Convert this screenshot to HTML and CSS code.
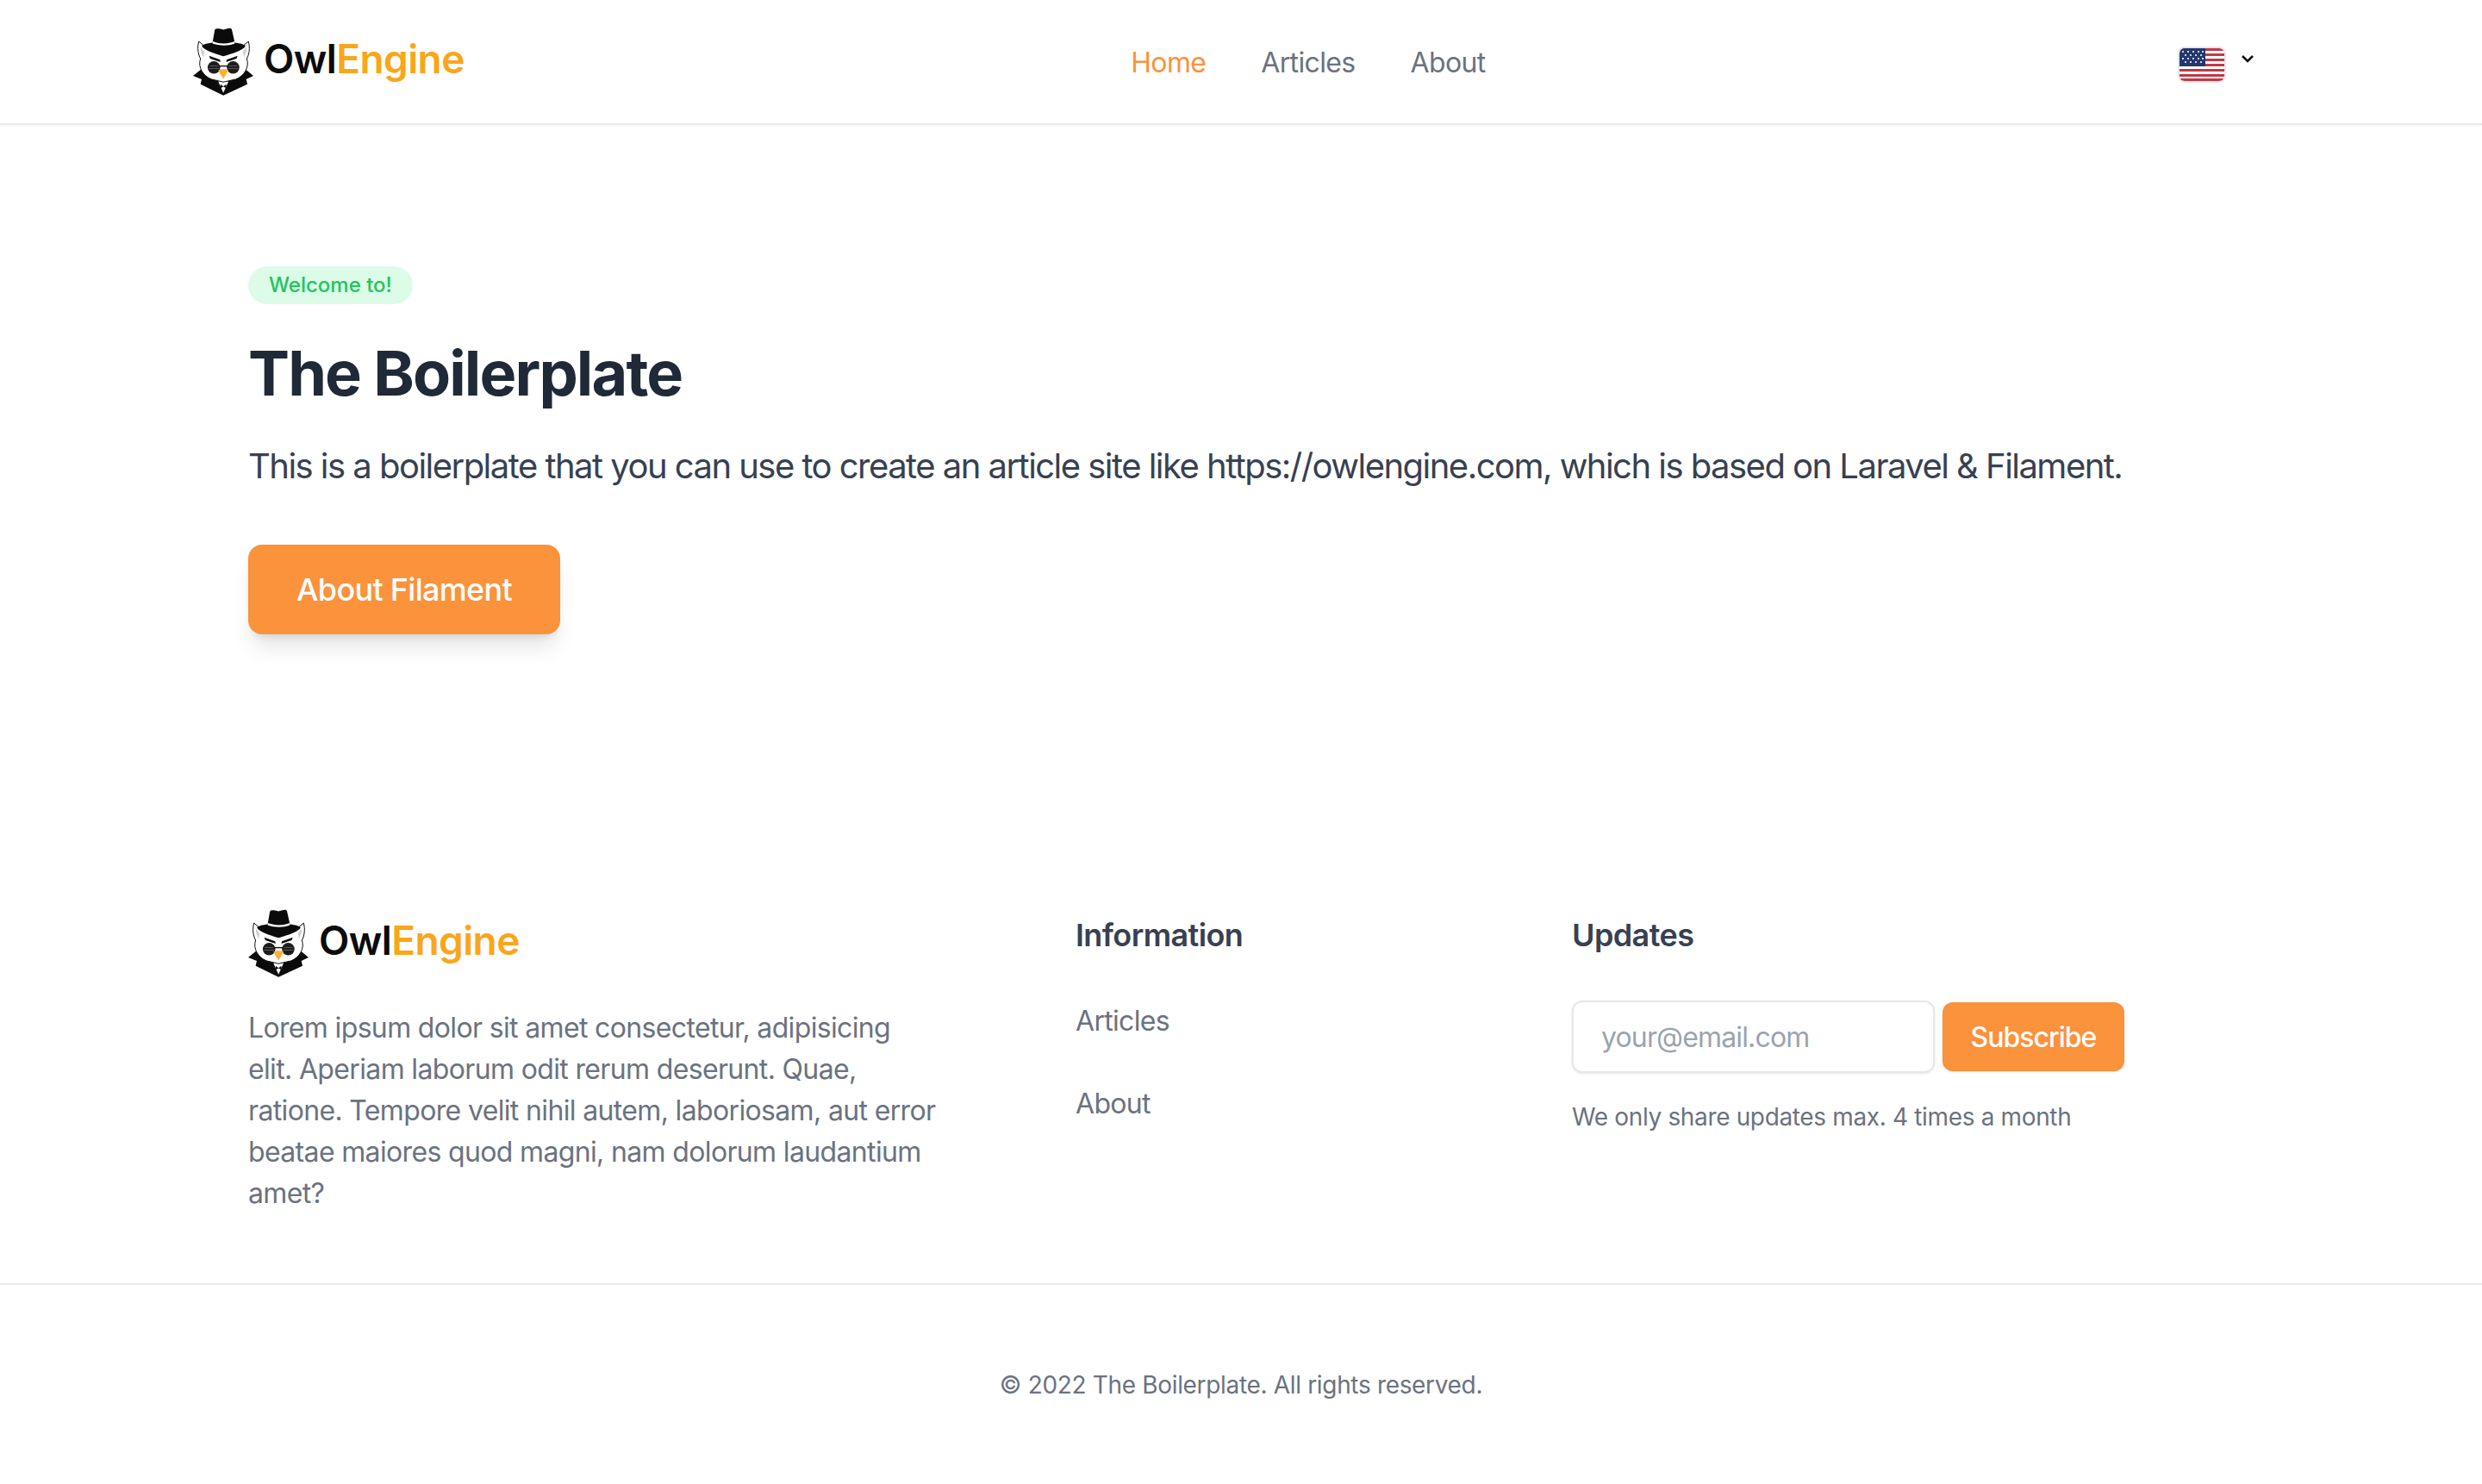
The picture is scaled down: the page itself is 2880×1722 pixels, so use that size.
FILE: index.html
```html
<!DOCTYPE html>
<html lang="en">
<head>
    <meta charset="UTF-8">
    <meta name="viewport" content="width=device-width, initial-scale=1.0">
    <title>The Boilerplate</title>
    <link rel="stylesheet" href="styles.css">
</head>
<body>
    <svg class="defs" width="0" height="0">
        <symbol id="owl" viewBox="72 65 211 240">
            <!-- suit -->
            <path fill="#0b0b0b" d="M72 236 L100 214 L135 244 L178 262 L222 244 L256 214 L283 236 L258 248 L262 266 L178 305 L98 266 L102 248 Z"/>
            <path fill="#fff" d="M160 256 L196 256 L178 296 Z"/>
            <path fill="#0b0b0b" d="M168 266 L178 273 L188 266 L188 279 L178 274 L168 279 Z"/>
            <!-- head -->
            <path fill="#fff" stroke="#0b0b0b" stroke-width="3" d="M92 116 L112 132 L246 132 L266 116 C272 140 268 162 260 176 C270 205 252 236 222 248 L178 258 L136 248 C106 236 88 205 98 176 C90 162 86 140 92 116 Z"/>
            <path fill="#cfcfcf" d="M98 134 L112 152 L108 172 C102 160 98 148 98 134 Z M260 134 L246 152 L250 172 C256 160 260 148 260 134 Z"/>
            <!-- hat -->
            <path fill="#0b0b0b" d="M103 132 C100 128 122 122 140 120 L148 76 C150 68 170 72 178 75 C188 72 206 64 208 76 L218 120 C236 122 258 128 255 132 C248 146 215 156 178 168 C142 156 110 146 103 132 Z"/>
            <path fill="#fff" d="M141 116 C165 126 195 126 217 116 L218 123 C195 132 165 132 140 123 Z"/>
            <!-- brows and glasses -->
            <path fill="#0b0b0b" d="M128 166 L166 180 L168 188 L132 176 Z M228 166 L190 180 L188 188 L224 176 Z"/>
            <circle cx="145" cy="207" r="22" fill="#1c1c1c"/>
            <circle cx="212" cy="207" r="22" fill="#1c1c1c"/>
            <path fill="#0b0b0b" d="M165 200 H192 V204 H165 Z"/>
            <path fill="#6a6a6a" d="M130 201 H160 V203 H130 Z M127 209 H163 V211 H127 Z M197 201 H227 V203 H197 Z M194 209 H230 V211 H194 Z"/>
            <!-- beak -->
            <path fill="#fbb034" d="M160 217 C170 212 186 212 196 217 L178 247 Z"/>
        </symbol>
    </svg>

    <header class="topbar">
        <div class="topbar-inner">
            <a class="logo" href="#">
                <svg class="logo-owl"><use href="#owl"/></svg>
                <span class="logo-text">Owl<span class="logo-accent">Engine</span></span>
            </a>
            <nav class="menu">
                <a class="menu-link active" href="#">Home</a>
                <a class="menu-link" href="#">Articles</a>
                <a class="menu-link" href="#">About</a>
            </nav>
            <button class="lang">
                <svg class="flag" viewBox="0 0 56 42">
                    <rect width="56" height="42" rx="8" fill="#e5e7eb"/>
                    <g clip-path="url(#flagclip)">
                        <rect x="2" y="2" width="52" height="38" fill="#fff"/>
                        <path fill="#bf3a45" d="M2 2h52v3H2zM2 8h52v3H2zM2 14h52v3H2zM2 20h52v3H2zM2 26h52v3H2zM2 32h52v3H2zM2 37h52v3H2z"/>
                        <rect x="2" y="2" width="30" height="21" fill="#24386e"/>
                        <g fill="#c9d0e2">
                            <path d="M5 5h2v2H5zM11 5h2v2h-2zM17 5h2v2h-2zM23 5h2v2h-2zM28 5h2v2h-2zM8 9h2v2H8zM14 9h2v2h-2zM20 9h2v2h-2zM26 9h2v2h-2zM5 13h2v2H5zM11 13h2v2h-2zM17 13h2v2h-2zM23 13h2v2h-2zM28 13h2v2h-2zM8 17h2v2H8zM14 17h2v2h-2zM20 17h2v2h-2zM26 17h2v2h-2z"/>
                        </g>
                    </g>
                    <clipPath id="flagclip"><rect x="2" y="2" width="52" height="38" rx="6"/></clipPath>
                </svg>
                <svg class="chevron" viewBox="0 0 16 10"><path d="M2 2l6 6 6-6" fill="none" stroke="#111" stroke-width="2.6"/></svg>
            </button>
        </div>
    </header>

    <main class="hero">
        <span class="badge">Welcome to!</span>
        <h1 class="hero-title">The Boilerplate</h1>
        <p class="hero-text">This is a boilerplate that you can use to create an article site like https://owlengine.com, which is based on Laravel &amp; Filament.</p>
        <a class="hero-btn" href="#">About Filament</a>
    </main>

    <footer>
        <div class="footer-grid">
            <div class="footer-about">
                <a class="logo" href="#">
                    <svg class="logo-owl"><use href="#owl"/></svg>
                    <span class="logo-text">Owl<span class="logo-accent">Engine</span></span>
                </a>
                <p class="footer-text">Lorem ipsum dolor sit amet consectetur, adipisicing elit. Aperiam laborum odit rerum deserunt. Quae, ratione. Tempore velit nihil autem, laboriosam, aut error beatae maiores quod magni, nam dolorum laudantium amet?</p>
            </div>
            <div class="footer-links">
                <h3 class="footer-title">Information</h3>
                <a class="footer-link" href="#">Articles</a>
                <a class="footer-link" href="#">About</a>
            </div>
            <div class="footer-updates">
                <h3 class="footer-title">Updates</h3>
                <form class="subscribe">
                    <input class="subscribe-input" type="email" placeholder="your@email.com">
                    <button class="subscribe-btn" type="button">Subscribe</button>
                </form>
                <p class="subscribe-note">We only share updates max. 4 times a month</p>
            </div>
        </div>
        <div class="copyright">© 2022 The Boilerplate. All rights reserved.</div>
    </footer>
</body>
</html>
```

FILE: styles.css
```css
* {
    box-sizing: border-box;
}
body {
    margin: 0;
    font-family: 'Inter', sans-serif;
    color: #1f2937;
    background: #fff;
}
a {
    text-decoration: none;
}
.defs {
    display: block;
    height: 0;
}

/* top bar */
.topbar {
    height: 145px;
    border-bottom: 2px solid #e8e9ec;
    box-shadow: 0 1px 3px rgba(0, 0, 0, 0.06);
}
.topbar-inner {
    max-width: 2432px;
    height: 100%;
    margin: 0 auto;
    display: flex;
    align-items: center;
    justify-content: space-between;
}
.logo {
    display: flex;
    align-items: center;
    gap: 12px;
}
.logo-owl {
    width: 70px;
    height: 80px;
}
.logo-text {
    font-size: 46px;
    font-weight: 600;
    line-height: 60px;
    letter-spacing: -0.6px;
    color: #0b0b0b;
    margin-top: -6px;
}
.logo-accent {
    color: #faa61a;
}
.topbar .logo {
    margin-top: -2px;
}
.menu {
    display: flex;
    gap: 64px;
    margin-left: -30px;
    padding-top: 2px;
}
.menu-link {
    font-size: 32px;
    line-height: 48px;
    letter-spacing: -0.65px;
    color: #6b7280;
}
.menu-link.active {
    color: #fb923c;
}
.lang {
    display: flex;
    align-items: flex-start;
    gap: 17px;
    padding: 6px 0 0;
    margin-right: 40px;
    border: none;
    background: none;
}
.flag {
    width: 56px;
    height: 42px;
}
.chevron {
    width: 16px;
    height: 10px;
    margin-top: 9px;
}

/* hero */
.hero {
    max-width: 2304px;
    margin: 0 auto;
    padding-top: 164px;
    height: 912px;
}
.badge {
    display: inline-block;
    padding: 6px 24px;
    border-radius: 24px;
    background: #dcfce7;
    color: #22c55e;
    font-size: 24px;
    font-weight: 500;
    line-height: 32px;
}
.hero-title {
    margin: 40px 0 0;
    font-size: 72px;
    font-weight: 700;
    line-height: 80px;
    letter-spacing: -1.9px;
}
.hero-text {
    margin: 38px 0 0;
    font-size: 40px;
    line-height: 60px;
    letter-spacing: -1.53px;
    color: #374151;
    white-space: nowrap;
}
.hero-btn {
    display: inline-block;
    margin-top: 61px;
    padding: 0 56px;
    border-radius: 16px;
    background: #fb923c;
    color: #fff;
    font-size: 36px;
    font-weight: 500;
    line-height: 104px;
    letter-spacing: -0.7px;
    box-shadow: 0 20px 25px -5px rgba(0, 0, 0, 0.1), 0 8px 10px -6px rgba(0, 0, 0, 0.1);
}

/* footer */
.footer-grid {
    max-width: 2304px;
    margin: 0 auto;
    display: grid;
    grid-template-columns: 5fr 3fr 4fr;
    height: 432px;
}
.footer-about .logo {
    height: 96px;
    margin-top: -11px;
}
.footer-text {
    margin: 27px 0 0;
    width: 800px;
    font-size: 32px;
    line-height: 48px;
    letter-spacing: -0.65px;
    color: #6b7280;
}
.footer-links {
    display: flex;
    flex-direction: column;
    align-items: flex-start;
}
.footer-title {
    margin: 0;
    font-size: 36px;
    font-weight: 600;
    line-height: 56px;
    letter-spacing: -0.6px;
    color: #374151;
}
.footer-link {
    margin-top: 48px;
    font-size: 32px;
    line-height: 48px;
    letter-spacing: -0.7px;
    color: #6b7280;
}
.subscribe {
    display: flex;
    align-items: center;
    gap: 9px;
    margin-top: 48px;
    width: 641px;
}
.subscribe-input {
    width: 421px;
    height: 84px;
    padding: 0 32px;
    border: 2px solid #e5e7eb;
    border-radius: 12px;
    box-shadow: 0 1px 3px rgba(0, 0, 0, 0.1);
    font-family: 'Inter', sans-serif;
    font-size: 32px;
    letter-spacing: -0.85px;
    outline: none;
}
.subscribe-input::placeholder {
    color: #9ca3af;
}
.subscribe-btn {
    width: 211px;
    height: 80px;
    border: none;
    border-radius: 12px;
    background: #fb923c;
    color: #fff;
    font-family: 'Inter', sans-serif;
    font-size: 32px;
    font-weight: 500;
    letter-spacing: -1px;
    box-shadow: 0 1px 3px rgba(0, 0, 0, 0.1);
}
.subscribe-note {
    margin: 31px 0 0;
    font-size: 28px;
    line-height: 40px;
    letter-spacing: -0.35px;
    color: #6b7280;
}
.copyright {
    height: 233px;
    padding-top: 96px;
    border-top: 2px solid #e8e9ec;
    text-align: center;
    font-size: 28px;
    line-height: 40px;
    letter-spacing: -0.33px;
    color: #6b7280;
}
```
